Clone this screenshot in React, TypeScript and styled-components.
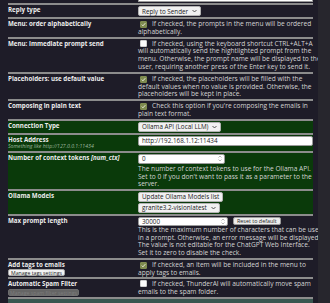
import React from 'react';
import styled, { createGlobalStyle } from 'styled-components';

const Global = createGlobalStyle`
  html, body { margin: 0; padding: 0; background: #1e1c28; }
  body { font-family: "Open Sans", "DejaVu Sans", sans-serif; color: #dadada; }
`;

const Page = styled.div`
  display: flex;
  width: 330px;
  height: 303px;
  overflow: hidden;
  background: #1e1c28;
`;

const Main = styled.div`
  flex: 0 0 305px;
  margin-left: 8px;
  display: flex;
  flex-direction: column;
`;

const Gutter = styled.div`
  flex: 1;
`;

const Scrollbar = styled.div`
  flex: 0 0 12px;
  background: #27262d;
`;

type Tone = 'plain' | 'green' | 'teal';

const Row = styled.div<{ $tone?: Tone; $stub?: boolean }>`
  display: grid;
  grid-template-columns: 130px 175px;
  padding: ${p => (p.$stub ? '0 0 1px' : '1px 0')};
  border-bottom: 2px solid #8c8c8c;
  background: ${p =>
    p.$tone === 'green' ? '#0a3a0a' : p.$tone === 'teal' ? '#3a5650' : 'transparent'};
`;

const TailRow = styled.div`
  flex: 1;
  min-height: 8px;
  background: #3a5650;
`;

const LeftCell = styled.div`
  display: flex;
  flex-direction: column;
  align-items: flex-start;
`;

const RightCell = styled.div<{ $gap?: number }>`
  display: flex;
  flex-direction: column;
  align-items: flex-start;
  gap: ${p => (p.$gap ?? 1)}px;
`;

const Label = styled.div`
  font-size: 6.2px;
  font-weight: 700;
  line-height: 7.7px;
  color: #ededed;
  white-space: nowrap;
`;

const Em = styled.span`
  font-style: italic;
`;

const SubLabel = styled.div`
  font-size: 5.2px;
  font-style: italic;
  line-height: 6.5px;
  color: #9fb89f;
  white-space: nowrap;
`;

const Desc = styled.div`
  font-size: 6.6px;
  line-height: 7.7px;
  color: #d4d4d4;
`;

const Line = styled.span`
  display: block;
  white-space: nowrap;
`;

const Box = styled.span<{ $on?: boolean }>`
  display: inline-flex;
  align-items: center;
  justify-content: center;
  width: 7px;
  height: 7px;
  box-sizing: border-box;
  vertical-align: -1px;
  margin: 0 5px 0 2px;
  border-radius: 1px;
  background: ${p => (p.$on ? '#7e8b4f' : '#fbfbfb')};
  border: 1px solid ${p => (p.$on ? '#7e8b4f' : '#d0d0d0')};
`;

const Control = styled.div`
  display: inline-flex;
  align-items: center;
  justify-content: space-between;
  gap: 4px;
  box-sizing: border-box;
  height: 10px;
  padding: 0 3px;
  background: #f1f1f1;
  border: 1px solid #b3b3b3;
  border-radius: 2px;
  color: #222;
  font-size: 6.3px;
  white-space: nowrap;
`;

const Field = styled.div<{ $w?: number; $h?: number }>`
  display: flex;
  align-items: center;
  justify-content: space-between;
  box-sizing: border-box;
  height: ${p => p.$h ?? 10}px;
  width: ${p => (p.$w ? `${p.$w}px` : '100%')};
  padding: 0 2px 0 3px;
  background: #ffffff;
  border: 1px solid #9a9a9a;
  border-radius: 2px;
  color: #222;
  font-size: 6.3px;
  white-space: nowrap;
`;

const Stub = styled.div`
  width: 100%;
  height: 2px;
  box-sizing: border-box;
  background: #ffffff;
  border: 1px solid #9a9a9a;
  border-top: none;
`;

const SmallButton = styled.div<{ $disabled?: boolean; $w?: number }>`
  display: inline-flex;
  align-items: center;
  justify-content: center;
  box-sizing: border-box;
  height: 7px;
  width: ${p => (p.$w ? `${p.$w}px` : 'auto')};
  padding: 0 2px;
  margin-top: 1px;
  background: ${p => (p.$disabled ? '#656565' : '#f3f3f3')};
  border: 1px solid ${p => (p.$disabled ? '#6d6d6d' : '#a8a8a8')};
  border-radius: 2px;
  color: ${p => (p.$disabled ? '#7c7c7c' : '#222')};
  font-size: 5.2px;
  white-space: nowrap;
`;

const Inline = styled.div`
  display: flex;
  align-items: center;
  gap: 5px;
`;

const ResetButton = styled.div`
  display: inline-flex;
  align-items: center;
  box-sizing: border-box;
  height: 8px;
  padding: 0 3px;
  background: #ececec;
  border: 1px solid #9a9a9a;
  border-radius: 2px;
  color: #222;
  font-size: 5.4px;
  white-space: nowrap;
`;

const Chevron = () => (
  <svg width="5" height="4" viewBox="0 0 10 6">
    <path d="M1 1l4 4 4-4" fill="none" stroke="#333" strokeWidth="1.6" />
  </svg>
);

const Spinner = () => (
  <svg width="4" height="7" viewBox="0 0 8 14">
    <path d="M1 5l3-3 3 3" fill="none" stroke="#888" strokeWidth="1.2" />
    <path d="M1 9l3 3 3-3" fill="none" stroke="#888" strokeWidth="1.2" />
  </svg>
);

const Tick = () => (
  <svg width="5" height="5" viewBox="0 0 10 10">
    <path d="M1.5 5.2l2.4 2.4L8.6 2.4" fill="none" stroke="#f4f4ea" strokeWidth="1.8" />
  </svg>
);

const Checked = ({ on }: { on: boolean }) => <Box $on={on}>{on ? <Tick /> : null}</Box>;

const CheckText = ({ on, lines }: { on: boolean; lines: string[] }) => (
  <Desc>
    {lines.map((l, i) => (
      <Line key={i}>
        {i === 0 ? <Checked on={on} /> : null}
        {l}
      </Line>
    ))}
  </Desc>
);

const Text = ({ lines }: { lines: string[] }) => (
  <Desc>
    {lines.map((l, i) => (
      <Line key={i}>{l}</Line>
    ))}
  </Desc>
);

export default function App() {
  return (
    <>
      <Global />
      <Page>
        <Main>
          <Row $stub>
            <LeftCell />
            <RightCell>
              <Stub />
            </RightCell>
          </Row>

          <Row>
            <LeftCell>
              <Label>Reply type</Label>
            </LeftCell>
            <RightCell>
              <Control>
                Reply to Sender <Chevron />
              </Control>
            </RightCell>
          </Row>

          <Row>
            <LeftCell>
              <Label>Menu: order alphabetically</Label>
            </LeftCell>
            <RightCell>
              <CheckText
                on
                lines={['If checked, the prompts in the menu will be ordered', 'alphabetically.']}
              />
            </RightCell>
          </Row>

          <Row>
            <LeftCell>
              <Label>Menu: immediate prompt send</Label>
            </LeftCell>
            <RightCell>
              <CheckText
                on={false}
                lines={[
                  'If checked, using the keyboard shortcut CTRL+ALT+A',
                  'will automatically send the hightlighted prompt from the',
                  'menu. Otherwise, the prompt name will be displayed to the',
                  'user, requiring another press of the Enter key to send it.',
                ]}
              />
            </RightCell>
          </Row>

          <Row>
            <LeftCell>
              <Label>Placeholders: use default value</Label>
            </LeftCell>
            <RightCell>
              <CheckText
                on
                lines={[
                  'If checked, the placeholders will be filled with the',
                  'default values when no value is provided. Otherwise, the',
                  'placeholders will be kept in place.',
                ]}
              />
            </RightCell>
          </Row>

          <Row>
            <LeftCell>
              <Label>Composing in plain text</Label>
            </LeftCell>
            <RightCell>
              <CheckText
                on
                lines={["Check this option if you're composing the emails in", 'plain text format.']}
              />
            </RightCell>
          </Row>

          <Row $tone="green">
            <LeftCell>
              <Label>Connection Type</Label>
            </LeftCell>
            <RightCell>
              <Control>
                Ollama API (Local LLM) <Chevron />
              </Control>
            </RightCell>
          </Row>

          <Row $tone="green">
            <LeftCell>
              <Label>Host Address</Label>
              <SubLabel>Something like http://127.0.0.1:11434</SubLabel>
            </LeftCell>
            <RightCell>
              <Field>http://192.168.1.12:11434</Field>
            </RightCell>
          </Row>

          <Row $tone="green">
            <LeftCell>
              <Label>
                Number of context tokens <Em>[num_ctx]</Em>
              </Label>
            </LeftCell>
            <RightCell>
              <Field $w={87}>
                0 <Spinner />
              </Field>
              <Text
                lines={[
                  'The number of context tokens to use for the Ollama API.',
                  "Set to 0 if you don't want to pass it as a parameter to the",
                  'server.',
                ]}
              />
            </RightCell>
          </Row>

          <Row $tone="green">
            <LeftCell>
              <Label>Ollama Models</Label>
            </LeftCell>
            <RightCell>
              <Control>Update Ollama Models list</Control>
              <Control>
                granite3.2-visionlatest <Chevron />
              </Control>
            </RightCell>
          </Row>

          <Row>
            <LeftCell>
              <Label>Max prompt length</Label>
            </LeftCell>
            <RightCell $gap={0}>
              <Inline>
                <Field $w={90} $h={9}>
                  30000 <Spinner />
                </Field>
                <ResetButton>Reset to default</ResetButton>
              </Inline>
              <Text
                lines={[
                  'This is the maximum number of characters that can be used',
                  'in a prompt. Otherwise, an error message will be displayed.',
                  'The value is not editable for the ChatGPT Web Interface.',
                  'Set it to zero to disable the check.',
                ]}
              />
            </RightCell>
          </Row>

          <Row>
            <LeftCell>
              <Label>Add tags to emails</Label>
              <SmallButton>Manage tags settings</SmallButton>
            </LeftCell>
            <RightCell>
              <CheckText
                on
                lines={['If checked, an item will be included in the menu to', 'apply tags to emails.']}
              />
            </RightCell>
          </Row>

          <Row>
            <LeftCell>
              <Label>Automatic Spam Filter</Label>
              <SmallButton $disabled $w={71}>
                Manage spam filter settings
              </SmallButton>
            </LeftCell>
            <RightCell>
              <CheckText
                on={false}
                lines={[
                  'If checked, ThunderAI will automatically move spam',
                  'emails to the spam folder.',
                ]}
              />
            </RightCell>
          </Row>

          <TailRow />
        </Main>
        <Gutter />
        <Scrollbar />
      </Page>
    </>
  );
}
